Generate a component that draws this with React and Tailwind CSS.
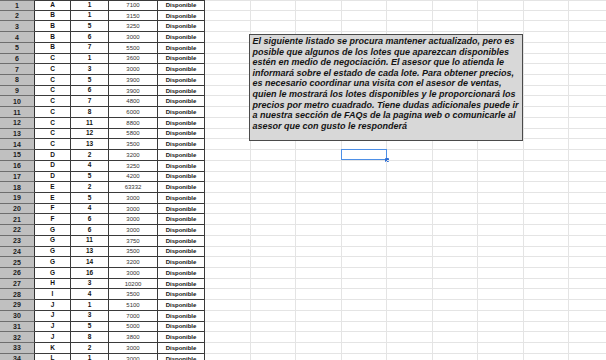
import React from "react";

const data = [
  ["A", "1", "7100"],
  ["B", "1", "3150"],
  ["B", "5", "3250"],
  ["B", "6", "3000"],
  ["B", "7", "5500"],
  ["C", "1", "3600"],
  ["C", "3", "3000"],
  ["C", "5", "3900"],
  ["C", "6", "3900"],
  ["C", "7", "4800"],
  ["C", "8", "6000"],
  ["C", "11", "8800"],
  ["C", "12", "5800"],
  ["C", "13", "3500"],
  ["D", "2", "3200"],
  ["D", "4", "3250"],
  ["D", "5", "4200"],
  ["E", "2", "63332"],
  ["E", "5", "3000"],
  ["F", "4", "3000"],
  ["F", "6", "3000"],
  ["G", "6", "3000"],
  ["G", "11", "3750"],
  ["G", "13", "3500"],
  ["G", "14", "3200"],
  ["G", "16", "3000"],
  ["H", "3", "10200"],
  ["I", "4", "3500"],
  ["J", "1", "5100"],
  ["J", "3", "7000"],
  ["J", "5", "5000"],
  ["J", "8", "3800"],
  ["K", "2", "3000"],
  ["L", "1", "3000"],
];

const lines = [
  "El siguiente listado se procura mantener actualizado, pero es",
  "posible que algunos de los lotes que aparezcan disponibles",
  "estén en medio de negociación. El asesor que lo atienda le",
  "informará sobre el estado de cada lote. Para obtener precios,",
  "es necesario coordinar una visita con el asesor de ventas,",
  "quien le mostrará los lotes disponibles y le proporcionará los",
  "precios por metro cuadrado. Tiene dudas adicionales puede ir",
  "a nuestra sección de FAQs de la pagina web o comunicarle al",
  "asesor que con gusto le responderá",
];

const empties = [0, 1, 2, 3, 4, 5, 6, 7, 8];

function Row({ r, i }) {
  const top = i === 0 ? "border-t" : "";
  const cell = `flex items-center justify-center border-r border-b border-[#3a3a3a] bg-white ${top}`;
  return (
    <div className="flex h-[10.72px] shrink-0">
      <div
        className={`w-[35px] shrink-0 flex items-center justify-center bg-[#c0c0c0] border-r border-r-[#333333] border-b border-b-[#6e6e6e] text-[7px] font-bold text-[#1a1a1a] leading-none ${top} border-t-[#6e6e6e]`}
      >
        {i + 1}
      </div>
      <div className={`w-[36px] shrink-0 ${cell} text-[6.5px] font-bold text-[#111] leading-none`}>{r[0]}</div>
      <div className={`w-[38px] shrink-0 ${cell} text-[6.5px] font-bold text-[#111] leading-none`}>{r[1]}</div>
      <div className={`w-[49px] shrink-0 ${cell} text-[6px] text-[#333] leading-none`}>{r[2]}</div>
      <div className={`w-[47px] shrink-0 ${cell} text-[6px] font-bold text-[#111] leading-none`}>Disponible</div>
      {empties.map((e) => (
        <div
          key={e}
          className={`relative w-[45.5px] shrink-0 border-r border-b border-[#e4e4e4] ${i === 0 ? "border-t" : ""}`}
        >
          {i === 14 && e === 3 ? (
            <div className="absolute -left-px -top-px w-[46px] h-[10.5px] border-[1.5px] border-[#4d8fe6]">
              <div className="absolute -right-[3px] -bottom-[3px] w-[4px] h-[4px] bg-[#2f6fd6] rounded-[1px]" />
            </div>
          ) : null}
        </div>
      ))}
    </div>
  );
}

export default function App() {
  return (
    <div
      className="relative w-[606px] h-[360px] overflow-hidden bg-white"
      style={{ fontFamily: '"Liberation Sans", Arial, sans-serif' }}
    >
      <div className="flex flex-col">
        {data.map((r, i) => (
          <Row key={i} r={r} i={i} />
        ))}
      </div>
      <div className="absolute left-[249px] top-[33.5px] w-[274px] h-[107.5px] bg-[#d8d8d8] border-[1.5px] border-[#4a4a4a] pl-[2.5px] pt-[1.5px]">
        {lines.map((l, k) => (
          <div
            key={k}
            className="whitespace-nowrap text-[9px] leading-[10.6px] font-bold italic text-[#141414]"
          >
            {l}
          </div>
        ))}
      </div>
    </div>
  );
}
